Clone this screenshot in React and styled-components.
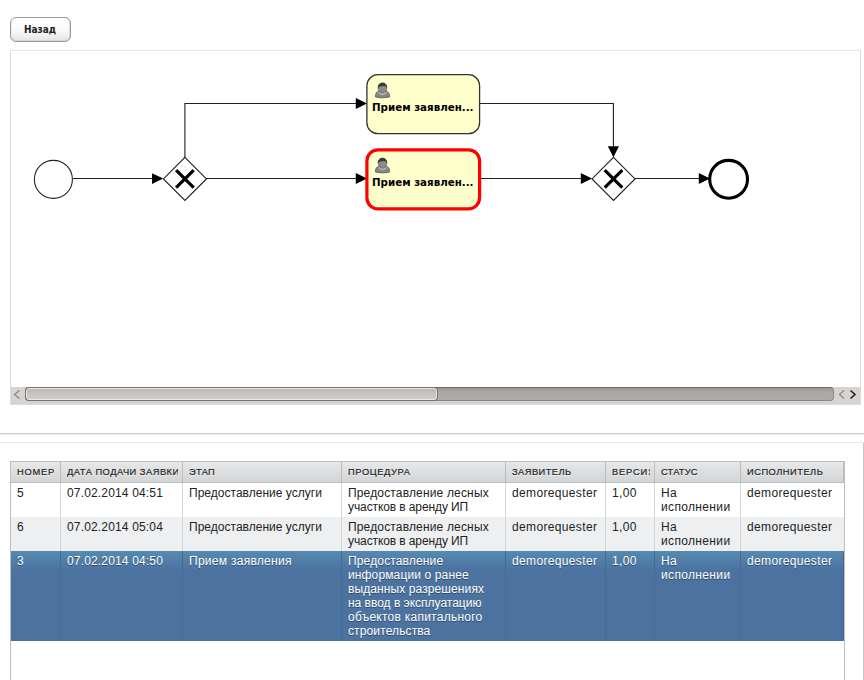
import React from "react";
import styled, { createGlobalStyle, css } from "styled-components";

const GlobalStyle = createGlobalStyle`
  * { box-sizing: border-box; }
  html, body { margin: 0; background: #fff; overflow: hidden; }
`;

const Page = styled.div`
  display: flex;
  flex-direction: column;
  width: 864px;
  height: 680px;
  overflow: hidden;
  background: #fff;
  color: #222;
  font-family: "Liberation Sans", Arial, sans-serif;
`;

const Toolbar = styled.div`
  flex: none;
  height: 50px;
  padding: 17px 0 0 10px;
`;

const BackButton = styled.button`
  display: block;
  width: 61px;
  height: 25px;
  padding: 1px 1px 0 0;
  border: 1px solid #999a9b;
  border-radius: 6px;
  background: linear-gradient(#fff 0%, #fafafa 50%, #ececed 85%, #e4e4e5 100%);
  box-shadow: inset 0 -1px 0 #d4d4d5, inset 1px 0 0 #eee, inset -1px 0 0 #ddd;
  color: #222;
  font: bold 10px/20px "DejaVu Sans Condensed", "DejaVu Sans", sans-serif;
  font-stretch: condensed;
`;

const DiagramPanel = styled.section`
  flex: none;
  display: flex;
  flex-direction: column;
  width: 851px;
  height: 355px;
  margin-left: 10px;
  border: 1px solid #dcdcdc;
  border-top-color: #e6e6e6;
`;

const Canvas = styled.svg`
  display: block;
  flex: none;
  width: 849px;
  height: 336px;
`;

const TaskLabel = styled.text`
  font: bold 11px "DejaVu Sans", Verdana, sans-serif;
  fill: #000;
`;

const Scrollbar = styled.div`
  display: flex;
  height: 17px;
  margin-bottom: -1px;
  background: #d6d3d0;
`;

const ScrollButton = styled.div`
  flex: none;
  width: ${(p) => p.$width}px;
  height: 15px;
  svg { display: block; }
`;

const Track = styled.div`
  width: 809px;
  height: 14px;
  border: 1px solid #8b8682;
  border-top-color: #6e6b68;
  border-left-color: #6e6b68;
  border-radius: 4px;
  background: linear-gradient(#9c9692, #aea8a4 35%, #b1aba7);
`;

const Thumb = styled.div`
  width: 411px;
  height: 12px;
  border: 1px solid #e9e7e4;
  border-radius: 3px;
  background: linear-gradient(#bbb7b4, #c8c4c1 50%, #cdcac7);
  box-shadow: 0 0 0 1px #77736f;
`;

const Splitter = styled.div`
  flex: none;
  height: 10px;
  margin-top: 28px;
  border-top: 1px solid #c9cacb;
  border-bottom: 1px solid #e8e8e8;
  box-shadow: inset 0 1px 0 #eee;
`;

const LowerPanel = styled.section`
  flex: 1;
  padding: 18px 0 0 10px;
  border-right: 1px solid #c6c8ca;
`;

const Table = styled.div`
  width: 835px;
  height: 230px;
  border: 1px solid #bcbec0;
  border-bottom: 0;
`;

const gridColumns = css`
  display: grid;
  grid-template-columns: 50px 122px 159px 164px 100px 49px 86px 103px;
`;

const HeaderRow = styled.div`
  ${gridColumns}
  height: 21px;
  border-bottom: 1px solid #bcbec0;
  background: linear-gradient(#e7e8e9, #d3d4d6);
`;

const HeaderCell = styled.div`
  padding: 0 4px 0 6px;
  border-right: 1px solid #babcbe;
  font-size: 9.3px;
  line-height: 21px;
  letter-spacing: ${(p) => p.$spacing}px;
  text-shadow: 0 1px 0 #f4f4f4;
  -webkit-text-stroke: 0.2px #222;
`;

const HeaderText = styled.div`
  overflow: hidden;
  white-space: nowrap;
`;

const Row = styled.div`
  ${gridColumns}
  height: ${(p) => p.$height}px;
  background: ${(p) => (p.$alt ? "#eeeff1" : "#fff")};
  ${(p) =>
    p.$selected &&
    css`
      color: #fff;
      background: linear-gradient(#558ab0 0, #4c72a0 20px);
      text-shadow: 0 1px 0 #30496b;
    `}
`;

const Cell = styled.div`
  padding: 3px 0 0 6px;
  border-right: 1px solid ${(p) => (p.$selected ? "#466b92" : "#d3d4d5")};
  overflow: hidden;
  font-size: 12px;
  line-height: 14px;
  &:last-child {
    border-right-color: ${(p) => (p.$selected ? "#466b92" : "transparent")};
  }
`;

const Line = styled.div`
  white-space: nowrap;
  letter-spacing: ${(p) => p.$spacing ?? 0.35}px;
`;

const headers = [
  ["НОМЕР", 0.75],
  ["ДАТА ПОДАЧИ ЗАЯВКИ", 0.5],
  ["ЭТАП", 0.3],
  ["ПРОЦЕДУРА", 0.6],
  ["ЗАЯВИТЕЛЬ", 0.45],
  ["ВЕРСИЯ", 0.85],
  ["СТАТУС", 0.2],
  ["ИСПОЛНИТЕЛЬ", 0.5],
];

const demo = [["demorequester"]];
const version = [["1,00"]];
const status = [["На"], ["исполнении"]];
const service = [["Предоставление услуги", 0.02]];
const forest = [["Предоставление лесных", 0.16], ["участков в аренду ИП", -0.1]];

const rows = [
  { height: 34, cells: [[["5"]], [["07.02.2014 04:51", 0.16]], service, forest, demo, version, status, demo] },
  { height: 34, alt: true, cells: [[["6"]], [["07.02.2014 05:04", 0.16]], service, forest, demo, version, status, demo] },
  {
    height: 90,
    selected: true,
    cells: [
      [["3"]],
      [["07.02.2014 04:50", 0.16]],
      [["Прием заявления", 0.28]],
      [
        ["Предоставление", 0.15],
        ["информации о ранее", 0.13],
        ["выданных разрешениях", 0.1],
        ["на ввод в эксплуатацию", -0.01],
        ["объектов капитального", 0.25],
        ["строительства", 0.12],
      ],
      demo,
      version,
      status,
      demo,
    ],
  },
];

function Gateway({ x, y }) {
  return (
    <g transform={`translate(${x} ${y})`} stroke="#000" fill="none">
      <path d="M0 -21.5 L21.5 0 L0 21.5 L-21.5 0Z" fill="#fff" stroke="#222" strokeWidth="1.15" />
      <path d="M-8.8 -8.8 L8.8 8.8 M8.8 -8.8 L-8.8 8.8" strokeWidth="3.2" />
    </g>
  );
}

function UserIcon({ x, y }) {
  return (
    <g transform={`translate(${x} ${y})`}>
      <path d="M0.5 14.3 C0.2 11 1.5 9 4.5 8 H10.5 C13.5 9 14.8 11 14.5 14.3 Q7.5 16 0.5 14.3Z" fill="#888" stroke="#555" strokeWidth="0.8" />
      <path d="M3.6 9.6 Q7.5 13.4 11.4 9.6" fill="none" stroke="#c6c6c6" strokeWidth="1.3" />
      <ellipse cx="7.5" cy="5.3" rx="4.3" ry="5.1" fill="#8c8c8c" stroke="#555" strokeWidth="0.6" />
      <path d="M2.9 6 C1.8 -1.8 13.2 -1.8 12.1 6 C11.4 3 9.5 2.9 7.2 3.5 C5 4 3.6 3.6 2.9 6Z" fill="#3c3c3c" />
    </g>
  );
}

function Task({ y, active }) {
  return (
    <g>
      <rect x="366.9" y={y} width="112.7" height="59" rx="11" fill="#ffffcc" stroke={active ? "#f00" : "#333"} strokeWidth={active ? 3.2 : 1.3} />
      <UserIcon x={375} y={y + 8} />
      <TaskLabel x="372" y={y + 36.3} textLength="101.5" lengthAdjust="spacingAndGlyphs">Прием заявлен...</TaskLabel>
    </g>
  );
}

function ProcessDiagram() {
  return (
    <Canvas viewBox="11 51 849 336">
      <g fill="none" stroke="#222" strokeWidth="1.1">
        <path d="M73 178.5H153 M184.9 158V103.5H357 M206 178.5H357 M480 103.5H613.4V147 M480 178.5H582 M635 178.5H699" />
        <circle cx="53.4" cy="179.4" r="19" />
      </g>
      <path d="M152 173.3L163.2 178.5L152 184Z M355.8 98L367 103.5L355.8 109Z M355.8 173L367 178.5L355.8 184Z M607.8 146.3H619L613.4 157.3Z M580.8 173L592 178.5L580.8 184Z M698.8 173L710 178.5L698.8 184Z" />
      <Gateway x={184.9} y={178.9} />
      <Gateway x={613.5} y={178.9} />
      <Task y={74.7} />
      <Task y={149.8} active />
      <circle cx="728.6" cy="179.3" r="18.9" fill="none" stroke="#000" strokeWidth="3.1" />
    </Canvas>
  );
}

export default function App() {
  return (
    <>
      <GlobalStyle />
      <Page>
        <Toolbar><BackButton>Назад</BackButton></Toolbar>
        <DiagramPanel>
          <ProcessDiagram />
          <Scrollbar>
            <ScrollButton $width={14}>
              <svg width="14" height="15"><path d="M8.5 3.5L3.5 7.5L8.5 11.5" fill="none" stroke="#888" strokeWidth="1.2" /></svg>
            </ScrollButton>
            <Track><Thumb /></Track>
            <ScrollButton $width={26}>
              <svg width="26" height="15">
                <path d="M10 3.5L5.5 7.5L10 11.5" fill="none" stroke="#888" strokeWidth="1.2" />
                <path d="M16.5 3.5L21 7.5L16.5 11.5" fill="none" stroke="#222" strokeWidth="1.6" />
              </svg>
            </ScrollButton>
          </Scrollbar>
        </DiagramPanel>
        <Splitter />
        <LowerPanel>
          <Table>
            <HeaderRow>
              {headers.map(([label, spacing]) => (
                <HeaderCell key={label} $spacing={spacing}><HeaderText>{label}</HeaderText></HeaderCell>
              ))}
            </HeaderRow>
            {rows.map((row, r) => (
              <Row key={r} $height={row.height} $alt={row.alt} $selected={row.selected}>
                {row.cells.map((lines, i) => (
                  <Cell key={i} $selected={row.selected}>
                    {lines.map(([text, spacing]) => <Line key={text} $spacing={spacing}>{text}</Line>)}
                  </Cell>
                ))}
              </Row>
            ))}
          </Table>
        </LowerPanel>
      </Page>
    </>
  );
}
